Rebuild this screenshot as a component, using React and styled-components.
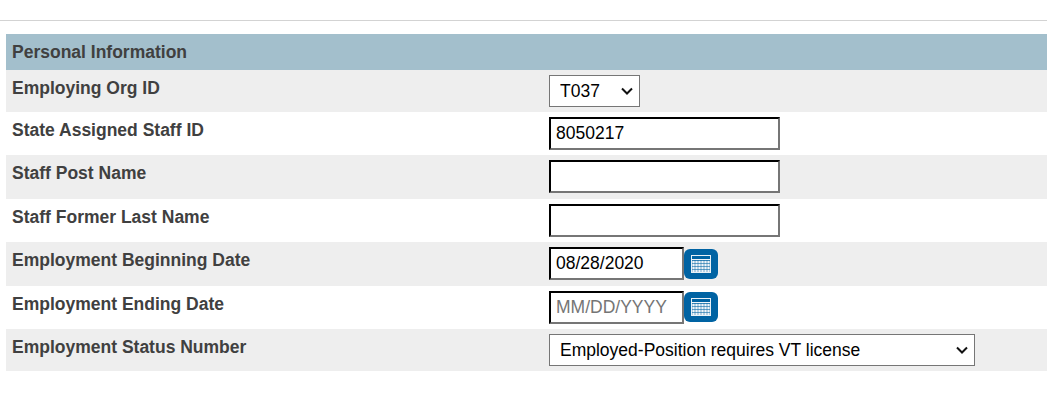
import React from "react";
import styled, { createGlobalStyle } from "styled-components";

const GlobalStyle = createGlobalStyle`
  html, body {
    margin: 0;
    padding: 0;
    background: #fff;
    font-family: "Liberation Sans", Arial, sans-serif;
  }
`;

const chevron = encodeURIComponent(
  '<svg xmlns="http://www.w3.org/2000/svg" width="12" height="8" viewBox="0 0 12 8"><path d="M1 1.5l5 5 5-5" fill="none" stroke="#111" stroke-width="2"/></svg>'
);

const Page = styled.div`
  width: 1047px;
  height: 411px;
  overflow: hidden;
  padding-top: 20px;
  box-sizing: border-box;
`;

const Divider = styled.hr`
  margin: 0 0 13px;
  border: 0;
  border-top: 1px solid #d3d3d3;
`;

const Form = styled.section`
  margin-left: 6px;
`;

const SectionTitle = styled.h2`
  margin: 0;
  height: 36px;
  padding-left: 6px;
  background: #a3bfcc;
  color: #404040;
  font-size: 17.5px;
  font-weight: bold;
  line-height: 36px;
`;

const Row = styled.div`
  display: grid;
  grid-template-columns: 543px 1fr;
  height: ${({ $height }) => $height}px;
  padding-top: 5px;
  box-sizing: border-box;
  background: ${({ $shaded }) => ($shaded ? "#eeeeee" : "#ffffff")};
`;

const Label = styled.label`
  padding: 3px 0 0 6px;
  color: #404040;
  font-size: 17.5px;
  font-weight: bold;
  line-height: 20px;
`;

const Controls = styled.div`
  display: flex;
  align-items: flex-start;
  align-self: start;
`;

const TextInput = styled.input`
  width: ${({ $width }) => $width}px;
  height: 33px;
  padding: 1px 5px;
  box-sizing: border-box;
  border: 2px inset #767676;
  border-color: #222 #767676 #767676 #222;
  border-radius: 0;
  background: #fff;
  color: #000;
  font-family: "Liberation Sans", Arial, sans-serif;
  font-size: 17.5px;
  outline: none;

  &::placeholder {
    color: #757575;
    opacity: 1;
  }
`;

const Select = styled.select`
  appearance: none;
  width: ${({ $width }) => $width}px;
  height: 32px;
  padding: 0 24px 0 10px;
  box-sizing: border-box;
  border: 1px solid #767676;
  border-radius: 0;
  background: #fff url("data:image/svg+xml,${chevron}") no-repeat right 6px center;
  color: #000;
  font-family: "Liberation Sans", Arial, sans-serif;
  font-size: 17.5px;
`;

const CalendarButton = styled.button`
  display: flex;
  align-items: center;
  justify-content: center;
  width: 34px;
  height: 30px;
  margin-top: ${({ $top }) => $top}px;
  padding: 0;
  border: 0;
  border-radius: 6px;
  background: #0063a3;
`;

function CalendarIcon() {
  const cells = [];
  for (let row = 0; row < 4; row++) {
    for (let col = 0; col < 6; col++) {
      cells.push(
        <rect
          key={`${row}-${col}`}
          x={1.25 + col * 3}
          y={5.75 + row * 3}
          width="2.5"
          height="2.5"
          fill="#f0f5f9"
        />
      );
    }
  }
  return (
    <svg width="20" height="18" viewBox="0 0 20 18" aria-hidden="true">
      <rect x="0.5" y="0.5" width="19" height="17" fill="none" stroke="#e8f0f6" />
      <path d="M0 4.5h20" stroke="#f0f5f9" />
      {cells}
    </svg>
  );
}

function DateField({ id, value, placeholder, buttonTop }) {
  return (
    <Controls>
      <TextInput
        id={id}
        $width={135}
        defaultValue={value}
        placeholder={placeholder}
      />
      <CalendarButton type="button" aria-label="Open calendar" $top={buttonTop}>
        <CalendarIcon />
      </CalendarButton>
    </Controls>
  );
}

export default function App() {
  return (
    <Page>
      <GlobalStyle />
      <Divider />
      <Form>
        <SectionTitle>Personal Information</SectionTitle>
        <Row $shaded $height={42}>
          <Label htmlFor="org">Employing Org ID</Label>
          <Controls>
            <Select id="org" $width={91} defaultValue="T037">
              <option>T037</option>
            </Select>
          </Controls>
        </Row>
        <Row $height={43}>
          <Label htmlFor="staff">State Assigned Staff ID</Label>
          <Controls>
            <TextInput id="staff" $width={231} defaultValue="8050217" />
          </Controls>
        </Row>
        <Row $shaded $height={44}>
          <Label htmlFor="post">Staff Post Name</Label>
          <Controls>
            <TextInput id="post" $width={231} />
          </Controls>
        </Row>
        <Row $height={43}>
          <Label htmlFor="former">Staff Former Last Name</Label>
          <Controls>
            <TextInput id="former" $width={231} />
          </Controls>
        </Row>
        <Row $shaded $height={44}>
          <Label htmlFor="begin">Employment Beginning Date</Label>
          <DateField id="begin" value="08/28/2020" buttonTop={2} />
        </Row>
        <Row $height={43}>
          <Label htmlFor="end">Employment Ending Date</Label>
          <DateField id="end" placeholder="MM/DD/YYYY" buttonTop={1} />
        </Row>
        <Row $shaded $height={42}>
          <Label htmlFor="status">Employment Status Number</Label>
          <Controls>
            <Select id="status" $width={426} defaultValue="licensed">
              <option value="licensed">Employed-Position requires VT license</option>
            </Select>
          </Controls>
        </Row>
      </Form>
    </Page>
  );
}
